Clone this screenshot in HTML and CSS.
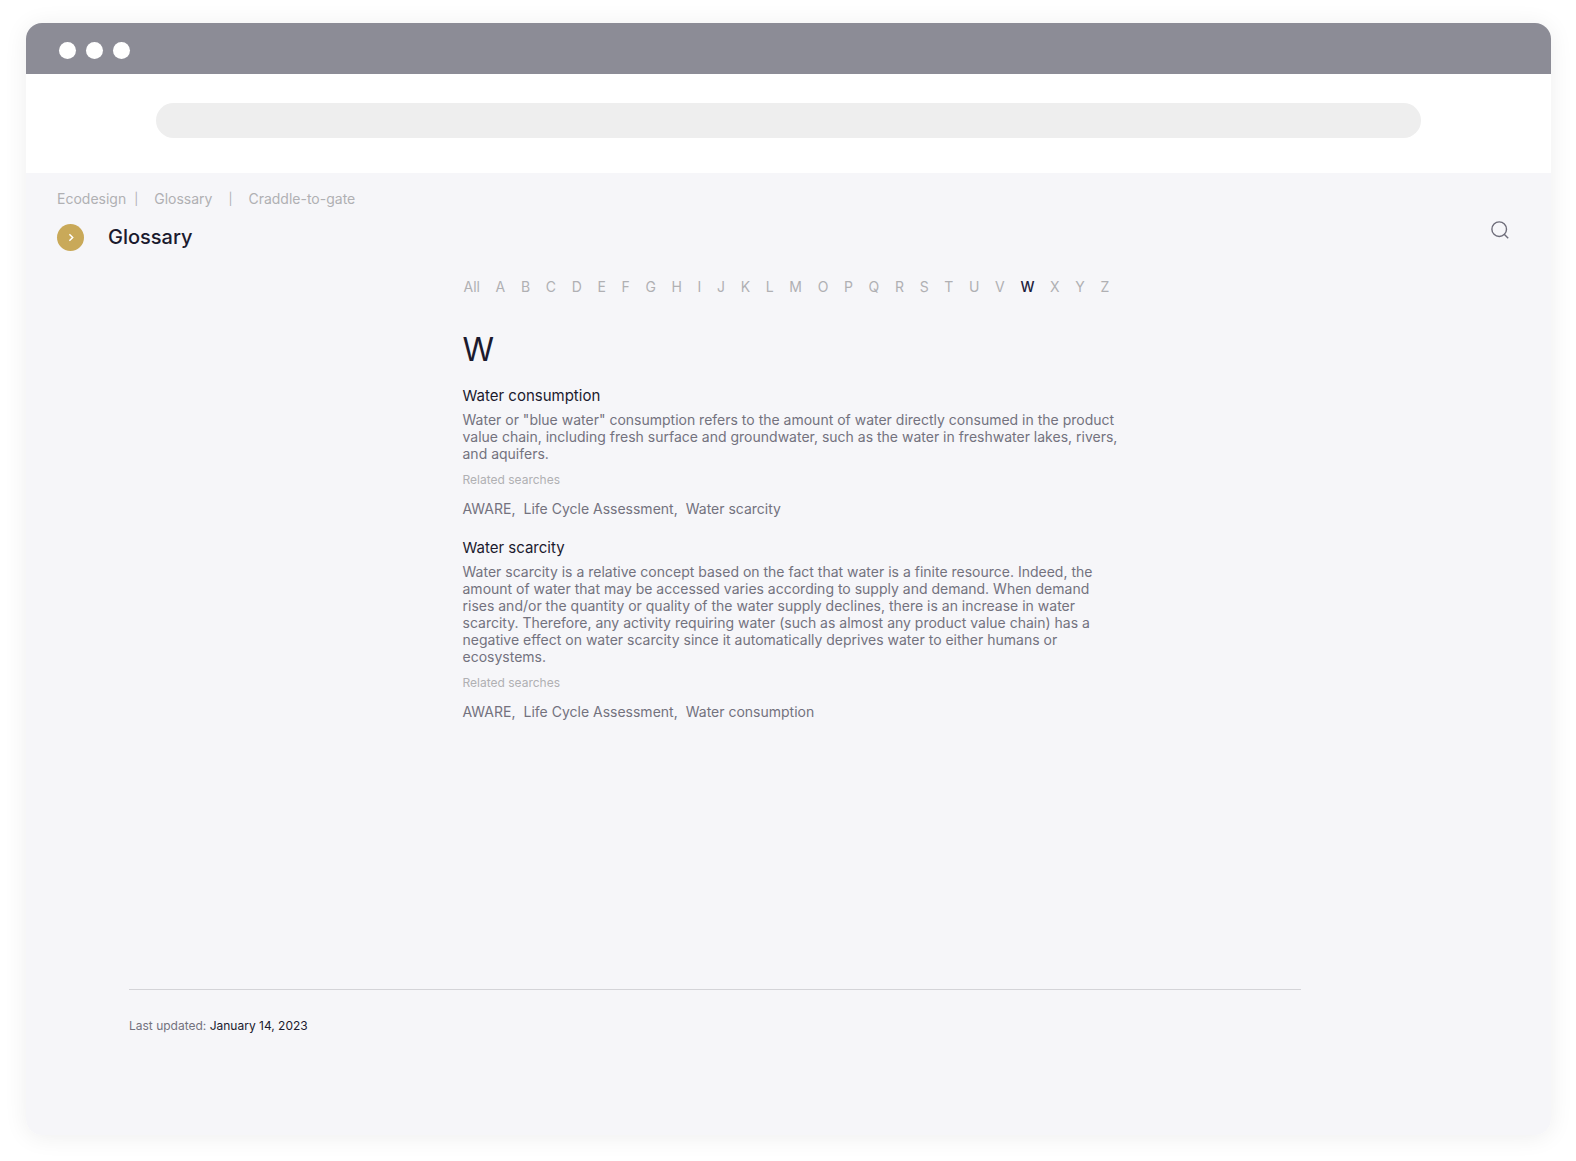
FILE: index.html
```
<!DOCTYPE html>
<html lang="en">
<head>
  <meta charset="UTF-8" />
  <meta name="viewport" content="width=device-width, initial-scale=1" />
  <title>Glossary</title>
  <link rel="stylesheet" href="styles.css">
</head>
<body>
  <div class="window">
    <div class="titlebar">
      <span class="dot"></span>
      <span class="dot"></span>
      <span class="dot"></span>
    </div>
    <div class="toolbar">
      <input type="text" class="address" aria-label="Address" />
    </div>

    <div class="page">
      <header class="header">
        <nav class="breadcrumb">
          <a href="#">Ecodesign</a>
          <span class="sep first">|</span>
          <a href="#">Glossary</a>
          <span class="sep">|</span>
          <a href="#">Craddle-to-gate</a>
        </nav>
        <div class="title-row">
          <button class="toggle" aria-label="Open menu">
            <svg width="27" height="27" viewBox="0 0 27 27" fill="none" stroke="#fff" stroke-width="1.5">
              <path d="M12.4 10.2l3.3 3.3-3.3 3.3" />
            </svg>
          </button>
          <h1>Glossary</h1>
        </div>
        <button class="search" aria-label="Search">
          <svg width="18" height="18" viewBox="0 0 18 18" fill="none" stroke="#6e6d7a" stroke-width="1.4">
            <circle cx="8.2" cy="8.2" r="7.3" />
            <path d="M13.2 13.2l4 4" />
          </svg>
        </button>
      </header>

      <main class="content">
        <nav class="letters">
          <a href="#">All</a>
          <a href="#">A</a>
          <a href="#">B</a>
          <a href="#">C</a>
          <a href="#">D</a>
          <a href="#">E</a>
          <a href="#">F</a>
          <a href="#">G</a>
          <a href="#">H</a>
          <a href="#">I</a>
          <a href="#">J</a>
          <a href="#">K</a>
          <a href="#">L</a>
          <a href="#">M</a>
          <a href="#">O</a>
          <a href="#">P</a>
          <a href="#">Q</a>
          <a href="#">R</a>
          <a href="#">S</a>
          <a href="#">T</a>
          <a href="#">U</a>
          <a href="#">V</a>
          <a href="#" class="active">W</a>
          <a href="#">X</a>
          <a href="#">Y</a>
          <a href="#">Z</a>
        </nav>

        <h2>W</h2>

        <article class="term">
          <h3>Water consumption</h3>
          <p>Water or "blue water" consumption refers to the amount of water directly consumed in the product
            value chain, including fresh surface and groundwater, such as the water in freshwater lakes, rivers,
            and aquifers.</p>
          <h4>Related searches</h4>
          <div class="related">
            <a href="#">AWARE,</a>
            <a href="#">Life Cycle Assessment,</a>
            <a href="#">Water scarcity</a>
          </div>
        </article>

        <article class="term">
          <h3>Water scarcity</h3>
          <p>Water scarcity is a relative concept based on the fact that water is a finite resource. Indeed, the
            amount of water that may be accessed varies according to supply and demand. When demand
            rises and/or the quantity or quality of the water supply declines, there is an increase in water
            scarcity. Therefore, any activity requiring water (such as almost any product value chain) has a
            negative effect on water scarcity since it automatically deprives water to either humans or
            ecosystems.</p>
          <h4>Related searches</h4>
          <div class="related">
            <a href="#">AWARE,</a>
            <a href="#">Life Cycle Assessment,</a>
            <a href="#">Water consumption</a>
          </div>
        </article>
      </main>

      <footer class="footer">
        Last updated: <time datetime="2023-01-14">January 14, 2023</time>
      </footer>
    </div>
  </div>
</body>
</html>
```
FILE: styles.css
```
* {
  box-sizing: border-box;
}
body {
  margin: 0;
  padding: 23px 25px 26px 26px;
  min-height: 100vh;
  display: flex;
  background-color: #fff;
  font-family: Inter, "Liberation Sans", sans-serif;
  font-size: 14px;
  line-height: 20px;
  color: #73727e;
}
a {
  color: inherit;
  text-decoration: none;
}
h1, h2, h3, h4, p {
  margin: 0;
  font-weight: normal;
}
button {
  padding: 0;
  border: none;
  background: none;
  cursor: pointer;
}
svg {
  display: block;
}

.window {
  flex: 1;
  display: flex;
  flex-direction: column;
  border-radius: 16px;
  overflow: hidden;
  box-shadow: 0 2px 24px rgba(0,0,0,0.07);
}
.titlebar {
  display: flex;
  align-items: center;
  gap: 10px;
  height: 51px;
  padding: 3px 33px 0;
  background-color: #8c8c96;
}
.dot {
  width: 17px;
  height: 17px;
  border-radius: 50%;
  background-color: #fff;
}
.toolbar {
  padding: 29px 130px 35px;
  background-color: #fff;
}
.address {
  display: block;
  width: 100%;
  height: 35px;
  padding: 0 18px;
  border: none;
  border-radius: 18px;
  background-color: #eee;
  font: inherit;
}

.page {
  flex: 1;
  display: flex;
  flex-direction: column;
  background-color: #f6f6f9;
}
.header {
  position: relative;
  padding: 16px 31px 0;
}
.breadcrumb {
  display: flex;
  color: #b0b0b3;
}
.sep {
  margin: 0 16px;
  font-size: 12px;
}
.sep.first {
  margin-left: 8px;
}
.title-row {
  display: flex;
  align-items: center;
  gap: 24px;
  margin-top: 14px;
}
.toggle {
  width: 27px;
  height: 27px;
  border-radius: 50%;
  background-color: #c9a959;
}
h1 {
  font-size: 20px;
  line-height: 28px;
  font-weight: 500;
  color: #1b1a2e;
}
.search {
  position: absolute;
  top: 48px;
  right: 42px;
}

.content {
  width: 660px;
  max-width: 100%;
  margin: 26px auto 0;
  padding-left: 4px;
}
.letters {
  display: flex;
  justify-content: space-between;
  padding: 0 9px 0 1px;
  color: #b0b0b3;
}
.letters .active {
  font-weight: 500;
  color: #1f1d3d;
}
h2 {
  margin-top: 33px;
  font-size: 32px;
  line-height: 40px;
  color: #1b1a2e;
}
.term {
  margin: 16px 0 19px;
}
h3 {
  margin-bottom: 5px;
  font-size: 15px;
  color: #1b1a2e;
}
.term p {
  line-height: 17px;
}
h4 {
  margin: 10px 0 11px;
  font-size: 12px;
  line-height: 16px;
  color: #b0b0b3;
}
.related {
  display: flex;
  gap: 8px;
}

.footer {
  margin: auto 250px 0 103px;
  padding: 28px 0 101px;
  border-top: 1px solid #d4d4d8;
  font-size: 12px;
  line-height: 16px;
}
.footer time {
  color: #1b1a2e;
}
```
